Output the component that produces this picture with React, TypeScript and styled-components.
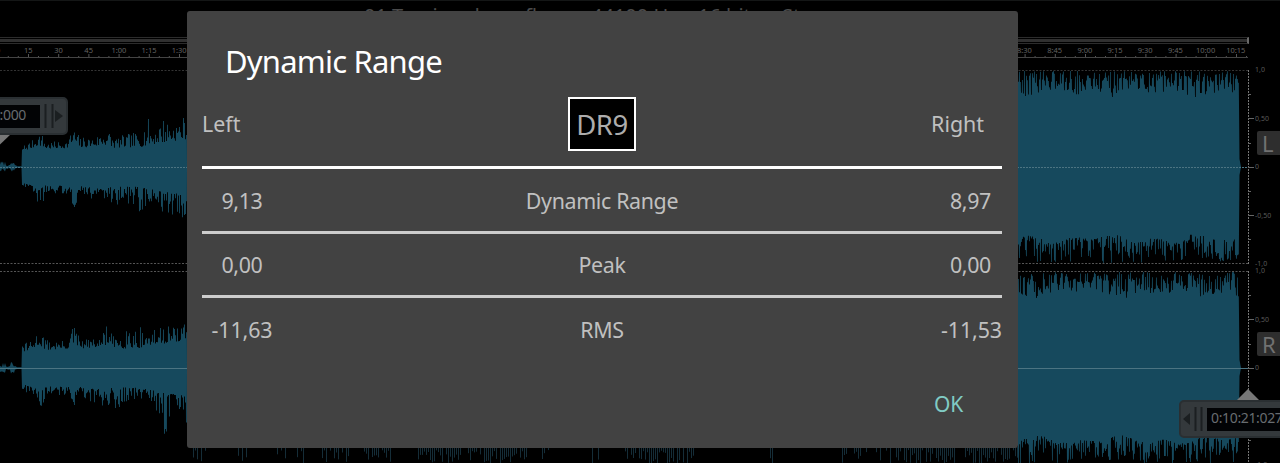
import React from 'react';
import styled, { createGlobalStyle } from 'styled-components';

const GlobalStyle = createGlobalStyle`
  *{box-sizing:border-box}
  body{margin:0;background:#000;font-family:"Noto Sans","Open Sans",sans-serif;overflow:hidden}
`;

const Screen = styled.div`
  position:relative;width:1280px;height:463px;overflow:hidden;background:#000;
`;
const Editor = styled.main`
  display:flex;flex-direction:column;width:1280px;height:463px;
`;
const TitleBar = styled.header`
  flex:none;display:flex;height:37px;border-top:1px solid #141616;color:#4b4b4b;font-size:20px;line-height:24px;
  padding:3px 0 0 364px;white-space:nowrap;
`;
const TitlePart = styled.span<{ $width: number }>`
  flex:none;width:${p => p.$width}px;
`;
const Overview = styled.div`
  flex:none;width:1249px;height:7px;padding:1px 0;border:1px solid #2c2c2c;border-left:0;border-right:2px solid #6a6a6a;
  background:#303030 content-box;
`;
const Ruler = styled.div`
  flex:none;position:relative;display:flex;height:26px;margin-left:-17px;overflow:hidden;
`;
const Mark = styled.span`
  flex:none;width:30.2px;height:14px;text-align:center;font-size:7.5px;line-height:12px;color:#626262;white-space:nowrap;
`;
const Ticks = styled.svg`
  position:absolute;left:17px;top:10px;
`;
const Channel = styled.section`
  display:flex;flex:none;height:194px;margin-bottom:7px;
`;
const Wave = styled.svg`
  flex:none;display:block;overflow:visible;
`;
const Scale = styled.div`
  display:flex;flex-direction:column;justify-content:space-between;flex:none;width:32px;
  margin:-3px 0;padding-left:7px;
`;
const Level = styled.span`
  font-size:7px;line-height:6px;color:#5a5a5a;white-space:nowrap;
`;
const Badge = styled.div<{ $top: number }>`
  position:absolute;left:1257px;top:${p => p.$top}px;width:25px;height:24px;border-radius:2px;
  background:#2e2e2e;color:#717171;font-size:22px;line-height:24px;padding-left:5px;
`;
const Handle = styled.div<{ $left: number; $top: number; $width: number }>`
  position:absolute;left:${p => p.$left}px;top:${p => p.$top}px;width:${p => p.$width}px;height:38px;
  display:flex;align-items:center;background:#34393c;border:2px solid #2a2f32;border-radius:5px;
`;
const Time = styled.div<{ $width: number; $end?: boolean }>`
  flex:none;width:${p => p.$width}px;height:23px;background:#020305;color:#686c70;font-size:14px;line-height:20px;
  letter-spacing:-.35px;white-space:nowrap;display:flex;justify-content:${p => (p.$end ? 'flex-end' : 'flex-start')};
  padding:0 14px 0 4px;
`;
const Grip = styled.svg`
  flex:none;display:block;
`;
const Pointer = styled.svg<{ $left: number; $top: number }>`
  position:absolute;left:${p => p.$left}px;top:${p => p.$top}px;
`;

const Dialog = styled.section`
  position:absolute;left:187px;top:11px;width:831px;height:437px;border-radius:3px;background:#424242;
  color:#c0c0c0;padding:0 16px 0 15px;display:flex;flex-direction:column;
`;
const Title = styled.h1`
  margin:0;padding:29px 0 0 23px;height:80px;font-weight:400;font-size:31px;line-height:42px;color:#fff;
  letter-spacing:-.8px;white-space:nowrap;
`;
const Row = styled.div<{ $height: number; $line?: string; $lift?: number }>`
  display:grid;grid-template-columns:80px 1fr 80px;align-items:center;height:${p => p.$height}px;
  padding-bottom:${p => p.$lift || 0}px;
  border-bottom:${p => (p.$line ? `3px solid ${p.$line}` : '0')};font-size:21.4px;line-height:30px;
`;
const Cell = styled.span<{ $align?: string; $inset?: number; $tracking?: number }>`
  text-align:${p => p.$align || 'center'};padding-top:1px;padding-right:${p => p.$inset || 0}px;white-space:nowrap;
  letter-spacing:${p => p.$tracking ?? -0.35}px;
`;
const Rating = styled.div`
  justify-self:center;width:68px;height:54px;border:2px solid #fff;background:#000;color:#adadad;
  font-size:27.5px;line-height:52px;text-align:center;letter-spacing:-.4px;
`;
const Actions = styled.footer`
  display:flex;justify-content:flex-end;padding:27px 39px 0 0;
`;
const OkButton = styled.button`
  border:0;background:none;padding:0;font:400 21px/30px "Noto Sans",sans-serif;letter-spacing:-.2px;color:#80cbc4;
`;

const random = (seed: number) => () => {
  seed = (seed * 1664525 + 1013904223) >>> 0;
  return seed / 4294967296;
};

type Point = [number, number];
const lerp = (points: Point[], x: number) => {
  for (let i = 1; i < points.length; i++) {
    if (x <= points[i][0]) {
      const [x0, y0] = points[i - 1];
      const [x1, y1] = points[i];
      return y0 + ((y1 - y0) * (x - x0)) / (x1 - x0);
    }
  }
  return points[points.length - 1][1];
};

// Distance from the centre line: the solid body of the quiet opening, then the tallest spikes of each side.
const introBody: Point[] = [[22, 16], [30, 18], [38, 22], [46, 18], [68, 19], [73, 24], [80, 19], [106, 22], [112, 19], [140, 20], [160, 24], [187, 28]];
const introPeak: Record<string, Point[]> = {
  up0: [[22, 22], [34, 28], [40, 36], [46, 25], [66, 26], [73, 40], [80, 30], [95, 30], [106, 40], [114, 30], [140, 36], [149, 50], [152, 36], [162, 50], [175, 44], [187, 54]],
  down0: [[22, 20], [34, 26], [40, 46], [46, 25], [66, 28], [73, 44], [80, 27], [106, 38], [125, 38], [140, 46], [155, 40], [172, 52], [187, 50]],
  up1: [[22, 24], [34, 28], [40, 50], [44, 29], [66, 27], [73, 44], [80, 30], [100, 28], [106, 50], [112, 32], [126, 46], [150, 38], [160, 40], [164, 62], [168, 44], [180, 38], [187, 62]],
  down1: [[22, 22], [34, 30], [40, 42], [46, 30], [66, 28], [73, 42], [80, 30], [106, 40], [124, 42], [140, 36], [158, 44], [163, 68], [167, 66], [170, 46], [187, 58]],
};

const buildWave = (seed: number, index: number) => {
  const r = random(seed);
  const side = (sign: number) => {
    const pts: string[] = [];
    const put = (x: number, a: number) => pts.push(`${x.toFixed(1)},${(97 + sign * a).toFixed(1)}`);
    const peaks = introPeak[(sign < 0 ? 'up' : 'down') + index];
    for (let x = 0; x < 17; x++) put(x, 1 + r() * (x < 6 || (x > 10 && x < 15) ? 5 : 1));
    put(17, 0.7);
    put(21.5, 0.7);
    for (let x = 22; x < 187; x++) {
      const body = lerp(introBody, x);
      const a = body + Math.pow(r(), 1.6) * (lerp(peaks, x) - body);
      put(x, a);
      put(x + 0.9, a);
    }
    put(187, 0);
    put(1018, 0);
    for (let x = 1018; x < 1239; x++) {
      const k = r();
      const swell = 0.85 + 0.15 * Math.sin(x / 9 + seed) * Math.sin(x / 23);
      const dip = sign < 0 ? 27 * Math.pow(k, 1.2) : 29 * (1 - Math.pow(k, 1.7));
      const a = 96 - dip * swell;
      put(x, a);
      put(x + 0.8, a);
    }
    put(1239.5, 8);
    put(1241, 0);
    return pts;
  };
  return `M${side(-1).join('L')}L${side(1).reverse().join('L')}Z`;
};

const waves = [buildWave(7, 0), buildWave(31, 1)];

// Peaks of the lower channel that reach below the dialog.
const lowerPeaks = (() => {
  const r = random(91);
  const zones: [number, number, number][] = [[193, 216, 0.3], [234, 248, 0.5], [275, 312, 0.4], [322, 350, 0.6], [364, 392, 0.8], [416, 462, 0.9], [468, 530, 0.8], [540, 556, 0.4], [588, 600, 0.6], [625, 695, 0.8], [770, 774, 0.3], [842, 870, 0.5], [876, 955, 0.8], [965, 1018, 0.9]];
  let d = '';
  zones.forEach(([a, b, density]) => {
    for (let x = a; x < b; x += 2) if (r() < density) d += `M${x}.5 176v${(3 + r() * 14).toFixed(1)}`;
  });
  return d;
})();

const stamp = (s: number) => (s < 60 ? `${s}` : `${Math.floor(s / 60)}:${String(s % 60).padStart(2, '0')}`);
const marks = Array.from({ length: 42 }, (_, i) => i * 15);
const isCovered = (s: number) => s > 90 && s < 510;
const levels = ['1,0', '0,50', '0', '-0,50', '-1,0'];

const ChannelView = ({ index }: { index: number }) => (
  <Channel>
    <Wave width="1248" height="194" viewBox="0 0 1248 194">
      <path d={waves[index]} fill="#16495d" />
      {index === 1 && <path d={lowerPeaks} stroke="#1b3846" strokeWidth=".8" />}
      <path d="M0 .5H1248" stroke={index ? '#555' : '#333'} strokeDasharray="2 1.5" />
      <path d="M0 193.5H1248" stroke="#555" strokeDasharray="2 1.5" />
      <path d="M0 97.5H1248" stroke="#4c7482" strokeDasharray={index ? undefined : '2 1'} />
      <path d="M1248.5 0V194" stroke="#777" strokeDasharray="2 1" />
      <path d="M1248 24.5h3M1248 48.5h6M1248 73.5h3M1248 97.5h6M1248 121.5h3M1248 145.5h6M1248 169.5h3" stroke="#666" />
    </Wave>
    <Scale>{levels.map(l => <Level key={l}>{l}</Level>)}</Scale>
  </Channel>
);

export default function App() {
  return (
    <Screen>
      <GlobalStyle />
      <Editor>
        <TitleBar>
          <TitlePart $width={227}>01 Tearing down.flac</TitlePart>
          <TitlePart $width={107}>44100 Hz</TitlePart>
          <TitlePart $width={84}>16 bits</TitlePart>
          <TitlePart $width={70}>St</TitlePart>
        </TitleBar>
        <Overview />
        <Ruler>
          {marks.map(s => <Mark key={s}>{isCovered(s) ? '' : stamp(s)}</Mark>)}
          <Ticks width="1249" height="6">
            <path d="M0 3.5H1248" stroke="#444" />
            {marks.map((s, i) => (
              <path key={s} d={`M${(i * 30.2 - 1.7).toFixed(1)} 0v3m10-1v1m10-1v1`} stroke="#555" />
            ))}
          </Ticks>
        </Ruler>
        <ChannelView index={0} />
        <ChannelView index={1} />
      </Editor>

      <Badge $top={131}>L</Badge>
      <Badge $top={332}>R</Badge>

      <Pointer $left={-14} $top={134} width="25" height="12"><path d="M0 0H25L12.5 12Z" fill="#777" /></Pointer>
      <Handle $left={-60} $top={97} $width={128}>
        <Time $width={98} $end>0:00:00:000</Time>
        <Grip width="26" height="24" viewBox="0 0 26 24">
          <path d="M5.5 0V24M12.5 0V24" stroke="#1b1f21" strokeWidth="2" />
          <path d="M15 6L23 12L15 18Z" fill="#1b1f21" />
        </Grip>
      </Handle>
      <Pointer $left={1236} $top={389} width="24" height="12"><path d="M0 12H24L12 0Z" fill="#777" /></Pointer>
      <Handle $left={1179} $top={400} $width={128}>
        <Grip width="26" height="24" viewBox="0 0 26 24">
          <path d="M9 6L2 12L9 18Z" fill="#1b1f21" />
          <path d="M14.5 0V24M20.5 0V24" stroke="#1b1f21" strokeWidth="2" />
        </Grip>
        <Time $width={98}>0:10:21:027</Time>
      </Handle>

      <Dialog>
        <Title>Dynamic Range</Title>
        <Row $height={78} $line="#fff" $lift={10}>
          <Cell $align="left" $tracking={0}>Left</Cell>
          <Rating>DR9</Rating>
          <Cell $align="right" $inset={18} $tracking={0}>Right</Cell>
        </Row>
        <Row $height={65} $line="#cdcdcd">
          <Cell>9,13</Cell><Cell>Dynamic Range</Cell><Cell $align="right" $inset={11}>8,97</Cell>
        </Row>
        <Row $height={64} $line="#cdcdcd">
          <Cell>0,00</Cell><Cell>Peak</Cell><Cell $align="right" $inset={11}>0,00</Cell>
        </Row>
        <Row $height={64} $lift={2}>
          <Cell $tracking={-0.1}>-11,63</Cell><Cell>RMS</Cell><Cell $align="right" $tracking={-0.1}>-11,53</Cell>
        </Row>
        <Actions><OkButton>OK</OkButton></Actions>
      </Dialog>
    </Screen>
  );
}
